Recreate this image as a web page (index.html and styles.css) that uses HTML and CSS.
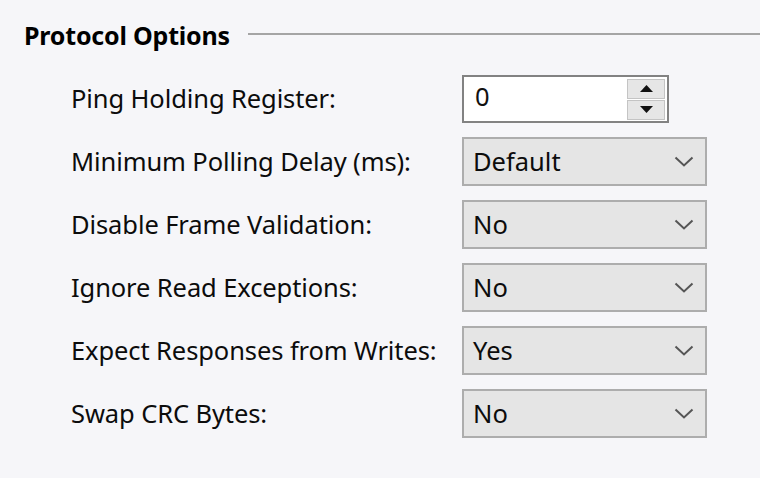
FILE: index.html
```html
<!DOCTYPE html>
<html>
<head>
<meta charset="utf-8">
<link rel="stylesheet" href="styles.css">
</head>
<body>
<div class="group">
  <div class="group-head">
    <span class="group-title">Protocol Options</span>
    <span class="group-rule"></span>
  </div>
  <div class="form">
    <label class="lbl">Ping Holding Register:</label>
    <div class="spin">
      <span class="spin-val">0</span>
      <div class="spin-btns">
        <span class="spin-btn"><svg width="13" height="7" viewBox="0 0 13 7"><path d="M6.5 0 L13 7 L0 7 Z" fill="#111"/></svg></span>
        <span class="spin-btn"><svg width="13" height="7" viewBox="0 0 13 7"><path d="M0 0 L13 0 L6.5 7 Z" fill="#111"/></svg></span>
      </div>
    </div>

    <label class="lbl">Minimum Polling Delay (ms):</label>
    <div class="combo"><span>Default</span><svg class="chev" width="20" height="11" viewBox="0 0 20 11"><path d="M1.5 1.5 L10 9.5 L18.5 1.5" fill="none" stroke="#555" stroke-width="2"/></svg></div>

    <label class="lbl">Disable Frame Validation:</label>
    <div class="combo"><span>No</span><svg class="chev" width="20" height="11" viewBox="0 0 20 11"><path d="M1.5 1.5 L10 9.5 L18.5 1.5" fill="none" stroke="#555" stroke-width="2"/></svg></div>

    <label class="lbl">Ignore Read Exceptions:</label>
    <div class="combo"><span>No</span><svg class="chev" width="20" height="11" viewBox="0 0 20 11"><path d="M1.5 1.5 L10 9.5 L18.5 1.5" fill="none" stroke="#555" stroke-width="2"/></svg></div>

    <label class="lbl">Expect Responses from Writes:</label>
    <div class="combo"><span>Yes</span><svg class="chev" width="20" height="11" viewBox="0 0 20 11"><path d="M1.5 1.5 L10 9.5 L18.5 1.5" fill="none" stroke="#555" stroke-width="2"/></svg></div>

    <label class="lbl">Swap CRC Bytes:</label>
    <div class="combo"><span>No</span><svg class="chev" width="20" height="11" viewBox="0 0 20 11"><path d="M1.5 1.5 L10 9.5 L18.5 1.5" fill="none" stroke="#555" stroke-width="2"/></svg></div>
  </div>
</div>
</body>
</html>
```
FILE: styles.css
```css
html, body {
  margin: 0;
  padding: 0;
  background: #f6f6f9;
  width: 760px;
  height: 478px;
  overflow: hidden;
  font-family: "Noto Sans", "Open Sans", sans-serif;
  color: #111;
}
.group {
  padding-top: 18px;
}
.group-head {
  display: flex;
  align-items: center;
  padding-left: 24px;
  height: 34px;
}
.group-title {
  font-weight: bold;
  font-size: 25px;
  letter-spacing: -0.2px;
  color: #000;
}
.group-rule {
  flex: 1;
  height: 2px;
  background: #a5a5a5;
  margin-left: 18px;
  margin-top: -3px;
}
.form {
  display: grid;
  grid-template-columns: 391px 245px;
  row-gap: 14px;
  margin-left: 71px;
  margin-top: 23px;
  align-items: center;
}
.lbl {
  font-size: 25.5px;
  letter-spacing: -0.1px;
  color: #0c0c0c;
  line-height: 1;
}
.spin {
  width: 207px;
  height: 48px;
  box-sizing: border-box;
  border: 2px solid #828282;
  background: #fff;
  display: flex;
  align-items: center;
  justify-content: space-between;
  padding: 0 2px 0 11px;
}
.spin-val {
  font-size: 25.5px;
  color: #111;
  line-height: 1;
  margin-top: -4px;
}
.spin-btns {
  display: flex;
  flex-direction: column;
  gap: 1px;
}
.spin-btn {
  width: 38px;
  height: 20px;
  box-sizing: border-box;
  background: #e6e6e6;
  border: 1px solid #c4c4c4;
  display: flex;
  align-items: center;
  justify-content: center;
}
.combo {
  width: 245px;
  height: 49px;
  box-sizing: border-box;
  border: 2px solid #adadad;
  background: #e5e5e5;
  display: flex;
  align-items: center;
  justify-content: space-between;
  padding: 0 11px 0 9px;
  font-size: 25.5px;
  line-height: 1;
  color: #0c0c0c;
}
.chev {
  display: block;
}
```
